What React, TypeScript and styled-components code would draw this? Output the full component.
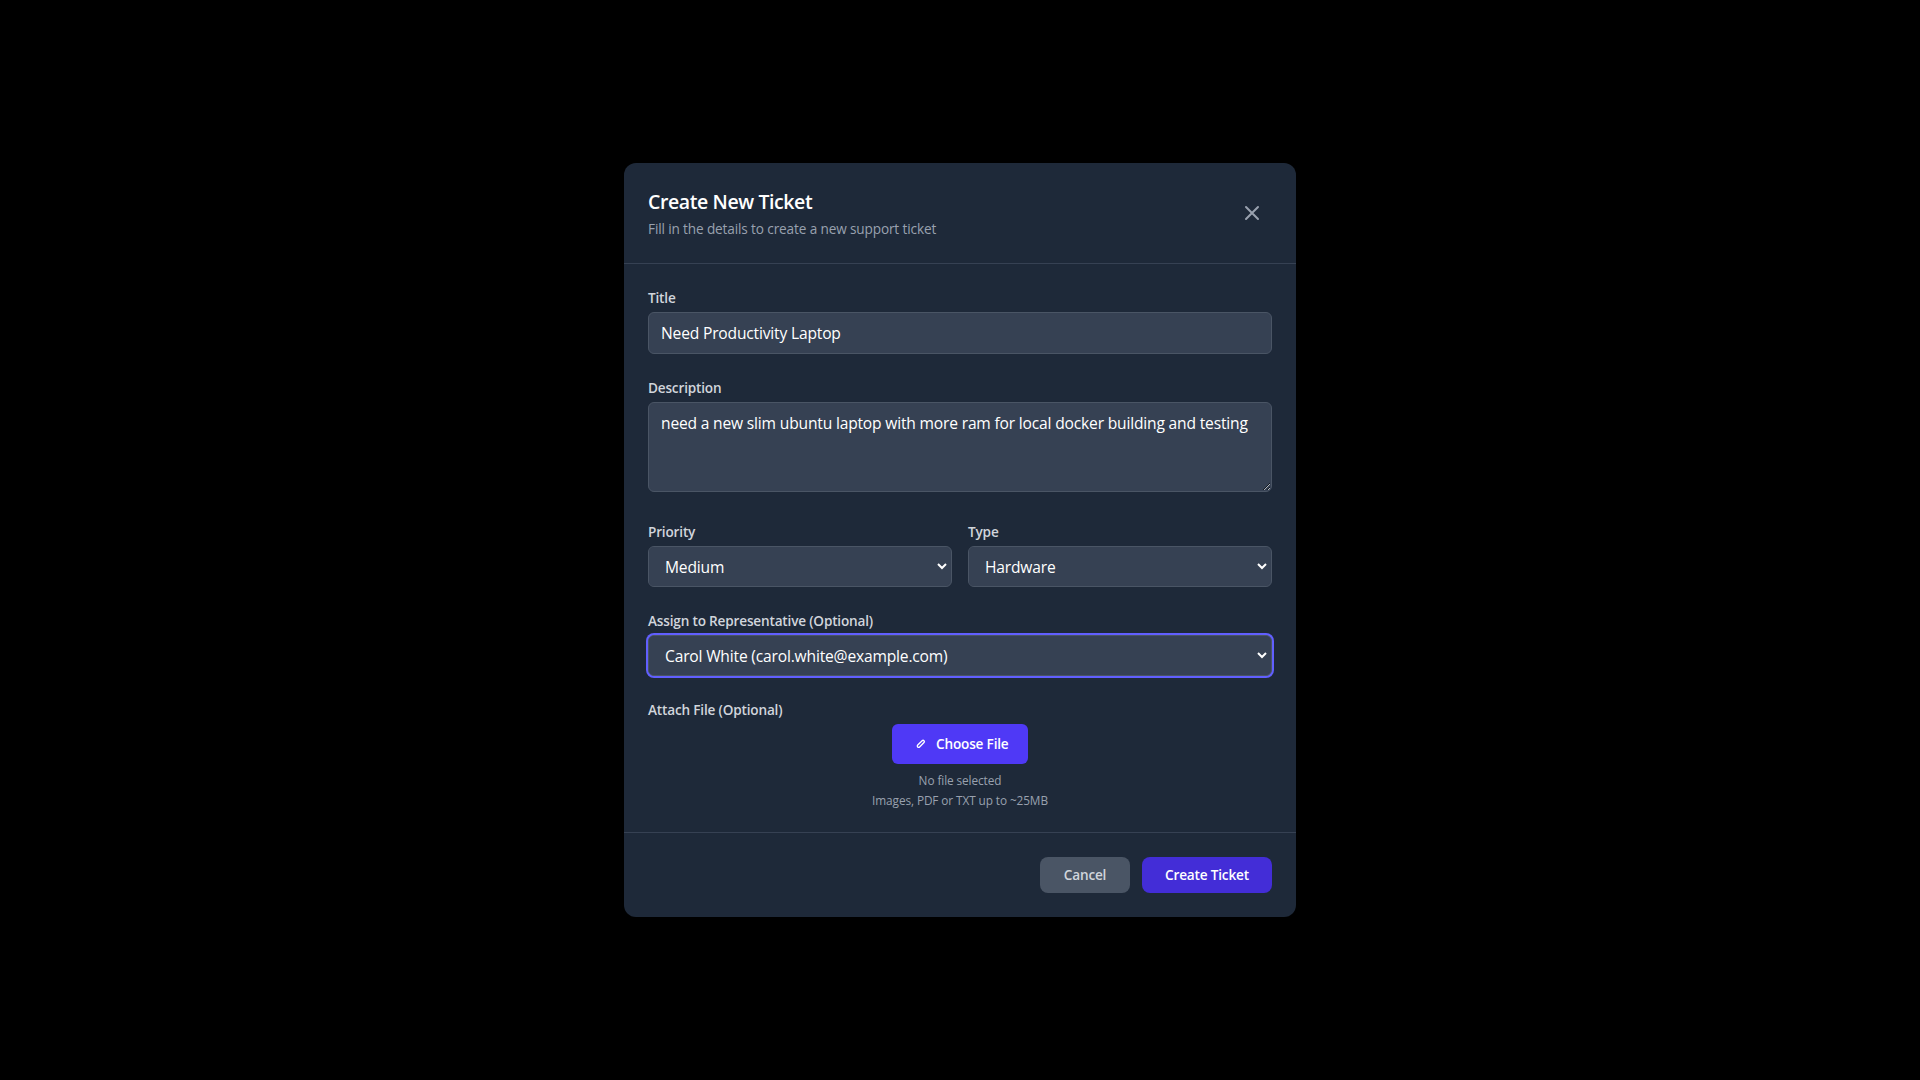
import React from "react";
import styled, { createGlobalStyle, css } from "styled-components";

const color = {
  panel: "#1e2939",
  field: "#364153",
  line: "#364153",
  edge: "#4a5565",
  muted: "#99a1af",
  soft: "#d1d5dc",
  ring: "#615fff",
  accent: "#4f39f6",
  accentDark: "#432dd7",
};

const GlobalStyle = createGlobalStyle`
  *, *::before, *::after { box-sizing: border-box; }
  body {
    margin: 0;
    background: #000;
    font-family: "Segoe UI", "Open Sans", "Noto Sans", sans-serif;
    color: #fff;
  }
  h2, p { margin: 0; }
  button, input, textarea, select { font: inherit; color: inherit; margin: 0; }
`;

const Backdrop = styled.main`
  display: flex;
  align-items: center;
  justify-content: center;
  min-height: 100vh;
  background: #000;
`;

const Modal = styled.form`
  width: 672px;
  border-radius: 12px;
  background: ${color.panel};
  overflow: hidden;
`;

const Header = styled.header`
  display: flex;
  align-items: center;
  justify-content: space-between;
  padding: 24px;
  border-bottom: 1px solid ${color.line};
`;

const Heading = styled.h2`
  padding-top: 1px;
  font-size: 19.5px;
  font-weight: 600;
  line-height: 28px;
  letter-spacing: -0.4px;
`;

const Subheading = styled.p`
  margin-top: 3px;
  font-size: 13.6px;
  line-height: 20px;
  letter-spacing: -0.13px;
  color: ${color.muted};
`;

const CloseButton = styled.button`
  display: flex;
  padding: 8px;
  border: 0;
  border-radius: 8px;
  background: transparent;
  color: ${color.muted};
`;

const Body = styled.div`
  display: flex;
  flex-direction: column;
  gap: 24px;
  padding: 24px;
`;

const Columns = styled.div`
  display: grid;
  grid-template-columns: 1fr 1fr;
  gap: 16px;
`;

const Field = styled.div<{ $tail?: number }>`
  display: flex;
  flex-direction: column;
  min-width: 0;
  padding-bottom: ${(p) => p.$tail ?? 0}px;
`;

const smallBold = css`
  font-size: 13.6px;
  font-weight: 600;
  line-height: 20px;
  letter-spacing: -0.18px;
`;

const Label = styled.label`
  ${smallBold}
  margin-bottom: 4px;
  color: ${color.soft};
`;

const box = css`
  width: 100%;
  border: 1px solid ${color.edge};
  border-radius: 6px;
  background-color: ${color.field};
`;

const controlText = css`
  outline: none;
  color: #fff;
  font-size: 15.6px;
  line-height: 24px;
  letter-spacing: -0.18px;
`;

const TextInput = styled.input`
  ${box}
  ${controlText}
  height: 42px;
  padding: 8px 12px;
`;

const TextArea = styled.textarea`
  ${box}
  ${controlText}
  display: block;
  height: 90px;
  padding: 8px 12px;
  resize: vertical;
`;

const SelectBox = styled.div<{ $active?: boolean }>`
  ${box}
  display: flex;
  height: 41px;
  padding-right: 1px;
  box-shadow: ${(p) => (p.$active ? `0 0 0 2px ${color.ring}` : "none")};
`;

const Select = styled.select`
  ${controlText}
  flex: 1;
  min-width: 0;
  padding: 8px 12px 7px;
  border: 0;
  border-radius: 5px;
  background-color: ${color.field};
`;

const Upload = styled.div`
  display: flex;
  flex-direction: column;
  align-items: center;
`;

const ChooseButton = styled.button`
  ${smallBold}
  display: flex;
  align-items: center;
  gap: 8px;
  width: 136px;
  height: 40px;
  margin-bottom: 8px;
  padding: 0 0 0 20px;
  border: 0;
  border-radius: 6px;
  background: ${color.accent};
  white-space: nowrap;
`;

const Hint = styled.p`
  font-size: 11.8px;
  line-height: 16px;
  letter-spacing: -0.09px;
  color: ${color.muted};

  & + & { margin-top: 4px; }
`;

const Footer = styled.footer`
  display: flex;
  justify-content: flex-end;
  gap: 12px;
  padding: 24px;
  border-top: 1px solid ${color.line};
`;

const ActionButton = styled.button<{ $primary?: boolean }>`
  ${smallBold}
  width: ${(p) => (p.$primary ? 130 : 90)}px;
  height: 36px;
  padding: 0;
  border: 0;
  border-radius: 8px;
  background: ${(p) => (p.$primary ? color.accentDark : color.edge)};
  color: ${(p) => (p.$primary ? "#fff" : color.soft)};
`;

function CloseIcon() {
  return (
    <svg width="24" height="24" viewBox="0 0 24 24" fill="none" stroke="currentColor" strokeWidth="2" strokeLinecap="round" strokeLinejoin="round">
      <path d="M6 18L18 6M6 6l12 12" />
    </svg>
  );
}

function ClipIcon() {
  return (
    <svg width="16" height="16" viewBox="0 0 24 24" fill="none" stroke="currentColor" strokeWidth="2" strokeLinecap="round" strokeLinejoin="round">
      <path d="M15.172 7l-6.586 6.586a2 2 0 1 0 2.828 2.828L18 9.828A2 2 0 0 0 15.172 7z" />
    </svg>
  );
}

interface SelectFieldProps {
  label: string;
  value: string;
  active?: boolean;
}

function SelectField({ label, value, active }: SelectFieldProps) {
  return (
    <Field>
      <Label>{label}</Label>
      <SelectBox $active={active}>
        <Select defaultValue={value}>
          <option value={value}>{value}</option>
        </Select>
      </SelectBox>
    </Field>
  );
}

export default function App() {
  return (
    <>
      <GlobalStyle />
      <Backdrop>
        <Modal onSubmit={(e) => e.preventDefault()}>
          <Header>
            <div>
              <Heading>Create New Ticket</Heading>
              <Subheading>Fill in the details to create a new support ticket</Subheading>
            </div>
            <CloseButton type="button" aria-label="Close">
              <CloseIcon />
            </CloseButton>
          </Header>
          <Body>
            <Field>
              <Label>Title</Label>
              <TextInput type="text" defaultValue="Need Productivity Laptop" />
            </Field>
            <Field $tail={6}>
              <Label>Description</Label>
              <TextArea
                spellCheck={false}
                defaultValue="need a new slim ubuntu laptop with more ram for local docker building and testing"
              />
            </Field>
            <Columns>
              <SelectField label="Priority" value="Medium" />
              <SelectField label="Type" value="Hardware" />
            </Columns>
            <SelectField
              label="Assign to Representative (Optional)"
              value="Carol White (carol.white@example.com)"
              active
            />
            <Field>
              <Label>Attach File (Optional)</Label>
              <Upload>
                <ChooseButton type="button">
                  <ClipIcon />
                  Choose File
                </ChooseButton>
                <Hint>No file selected</Hint>
                <Hint>Images, PDF or TXT up to ~25MB</Hint>
              </Upload>
            </Field>
          </Body>
          <Footer>
            <ActionButton type="button">Cancel</ActionButton>
            <ActionButton type="submit" $primary>
              Create Ticket
            </ActionButton>
          </Footer>
        </Modal>
      </Backdrop>
    </>
  );
}
